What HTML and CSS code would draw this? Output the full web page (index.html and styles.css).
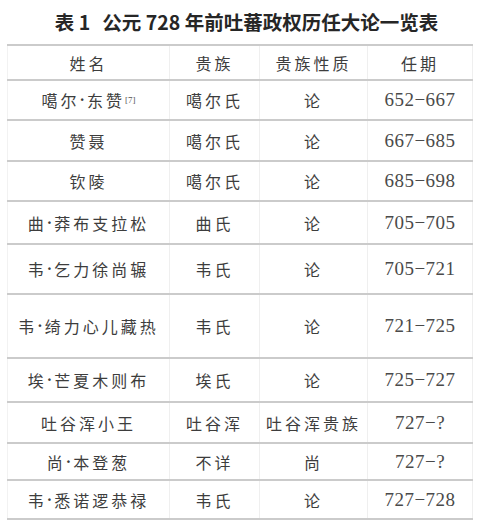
FILE: index.html
```html
<!DOCTYPE html>
<html lang="zh">
<head>
<meta charset="utf-8">
<link rel="stylesheet" href="styles.css">
</head>
<body>
<div class="page">
  <h1 class="title">表 1<span class="gap"></span>公元 728 年前吐蕃政权历任大论一览表</h1>
  <div class="table">
    <div class="row r0"><div class="c c1">姓名</div><div class="c c2">贵族</div><div class="c c3">贵族性质</div><div class="c c4">任期</div></div>
    <div class="row r1"><div class="c c1">噶尔<span class="dot">·</span>东赞<sup class="ref">[7]</sup></div><div class="c c2">噶尔氏</div><div class="c c3">论</div><div class="c c4 num">652−667</div></div>
    <div class="row r2"><div class="c c1">赞聂</div><div class="c c2">噶尔氏</div><div class="c c3">论</div><div class="c c4 num">667−685</div></div>
    <div class="row r3"><div class="c c1">钦陵</div><div class="c c2">噶尔氏</div><div class="c c3">论</div><div class="c c4 num">685−698</div></div>
    <div class="row r4"><div class="c c1">曲<span class="dot">·</span>莽布支拉松</div><div class="c c2">曲氏</div><div class="c c3">论</div><div class="c c4 num">705−705</div></div>
    <div class="row r5"><div class="c c1">韦<span class="dot">·</span>乞力徐尚辗</div><div class="c c2">韦氏</div><div class="c c3">论</div><div class="c c4 num">705−721</div></div>
    <div class="row r6"><div class="c c1">韦<span class="dot">·</span>绮力心儿藏热</div><div class="c c2">韦氏</div><div class="c c3">论</div><div class="c c4 num">721−725</div></div>
    <div class="row r7"><div class="c c1">埃<span class="dot">·</span>芒夏木则布</div><div class="c c2">埃氏</div><div class="c c3">论</div><div class="c c4 num">725−727</div></div>
    <div class="row r8"><div class="c c1">吐谷浑小王</div><div class="c c2">吐谷浑</div><div class="c c3">吐谷浑贵族</div><div class="c c4 num">727−?</div></div>
    <div class="row r9"><div class="c c1">尚<span class="dot">·</span>本登葱</div><div class="c c2">不详</div><div class="c c3">尚</div><div class="c c4 num">727−?</div></div>
    <div class="row r10 last"><div class="c c1">韦<span class="dot">·</span>悉诺逻恭禄</div><div class="c c2">韦氏</div><div class="c c3">论</div><div class="c c4 num">727−728</div></div>
  </div>
</div>
</body>
</html>
```

FILE: styles.css
```css
html, body {
  margin: 0;
  padding: 0;
  background: #fff;
}
.page {
  width: 483px;
  height: 526px;
  overflow: hidden;
}
.title {
  margin: 0;
  height: 44px;
  line-height: 44px;
  text-align: center;
  font-family: "Noto Sans CJK SC", "Noto Sans", sans-serif;
  font-weight: 700;
  font-size: 19.5px;
  color: #262626;
  padding-left: 10px;
}
.gap {
  display: inline-block;
  width: 12px;
}
.table {
  margin-left: 7px;
  width: 466px;
  display: flex;
  flex-direction: column;
}
.row {
  display: flex;
  box-sizing: border-box;
  border-top: 2px solid #cbcbcb;
}
.row.last {
  border-bottom: 2px solid #cbcbcb;
}
.r0 { height: 35px; }
.r1 { height: 40px; }
.r2 { height: 41px; }
.r3 { height: 40px; }
.r4 { height: 43px; }
.r5 { height: 50px; }
.r6 { height: 64px; }
.r7 { height: 44px; }
.r8 { height: 41px; }
.r9 { height: 37px; }
.r10 { height: 41px; }
.c {
  display: flex;
  align-items: center;
  justify-content: center;
  box-sizing: border-box;
  font-family: "Noto Sans CJK SC", sans-serif;
  font-size: 16px;
  font-weight: 400;
  color: #3d3d3d;
  letter-spacing: 3px;
  border-right: 1px solid #efefef;
  white-space: nowrap;
}
.c1 { width: 163px; border-left: 1px solid #f2f2f2; }
.c2 { width: 90px; }
.c3 { width: 108px; }
.c4 { width: 105px; }
.dot {
  font-family: "Liberation Serif", serif;
  font-weight: 700;
  letter-spacing: 2px;
}
.num {
  font-family: "Liberation Serif", serif;
  font-size: 19px;
  letter-spacing: 0.5px;
  color: #4a4a4a;
}
.ref {
  font-family: "Liberation Serif", serif;
  font-size: 9px;
  letter-spacing: 0;
  vertical-align: 7px;
  line-height: 0;
  color: #555;
}
```
